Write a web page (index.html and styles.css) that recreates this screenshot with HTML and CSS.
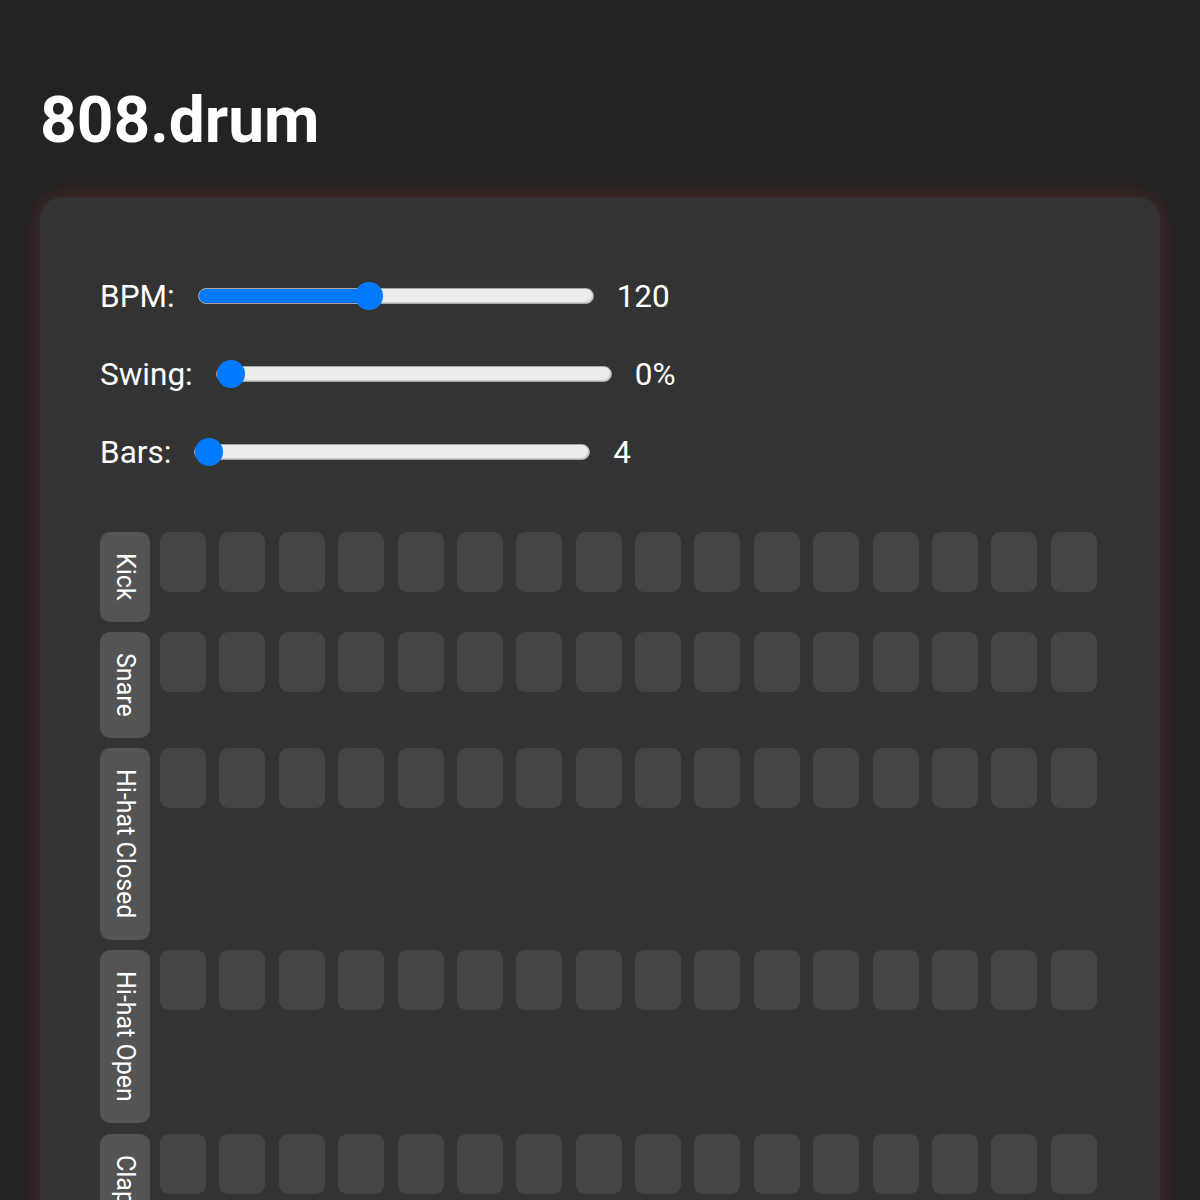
FILE: index.html
```html
<!DOCTYPE html>
<html lang="en">
<head>
<meta charset="utf-8">
<title>808.drum</title>
<link rel="stylesheet" href="styles.css">
</head>
<body>
<h1 class="title">808.drum</h1>
<main class="card">
  <section class="controls">
    <div class="control">
      <label class="control-label" for="bpm">BPM:</label>
      <input class="slider" id="bpm" type="range" min="60" max="200" value="120" style="--fill: 43.4%">
      <span class="control-value">120</span>
    </div>
    <div class="control">
      <label class="control-label" for="swing">Swing:</label>
      <input class="slider" id="swing" type="range" min="0" max="100" value="0" style="--fill: 3.5%">
      <span class="control-value">0%</span>
    </div>
    <div class="control">
      <label class="control-label" for="bars">Bars:</label>
      <input class="slider" id="bars" type="range" min="4" max="16" value="4" style="--fill: 3.5%">
      <span class="control-value">4</span>
    </div>
  </section>

  <section class="sequencer" id="sequencer"></section>
</main>
<script src="script.js"></script>
</body>
</html>
```

FILE: script.js
```js
const tracks = ["Kick", "Snare", "Hi-hat Closed", "Hi-hat Open", "Clap", "Rimshot"];
const seq = document.getElementById("sequencer");
tracks.forEach(name => {
  const label = document.createElement("div");
  label.className = "track-label";
  label.textContent = name;
  seq.appendChild(label);
  for (let i = 0; i < 16; i++) {
    const cell = document.createElement("button");
    cell.className = "step";
    cell.type = "button";
    seq.appendChild(cell);
  }
});
```

FILE: styles.css
```css
* { box-sizing: border-box; }

html, body {
  background: #232323;
}

body {
  margin: 0;
  padding: 0 40px 40px;
  color: #fff;
  font-family: Roboto, "Liberation Sans", sans-serif;
}

.title {
  margin: 83px 0 39px;
  font-size: 64px;
  line-height: 75px;
  font-weight: 700;
}

.card {
  background: #333333;
  border-radius: 22px;
  padding: 60px;
  box-shadow: 0 0 26px rgba(255, 60, 60, 0.22);
}

.controls {
  display: flex;
  flex-direction: column;
}

.control {
  display: flex;
  align-items: center;
  gap: 23px;
  height: 78px;
  font-size: 31.5px;
}

.control-label,
.control-value {
  color: #fff;
}

.slider {
  -webkit-appearance: none;
  appearance: none;
  width: 396px;
  height: 28px;
  margin: 0;
  padding: 0;
  background: transparent;
}

.slider::-webkit-slider-runnable-track {
  height: 16px;
  border-radius: 8px;
  border: 1px solid #a9a9a9;
  background: linear-gradient(to right, #007aff 0, #007aff var(--fill), #ececec var(--fill), #ececec 100%);
  box-shadow: inset -1px -1px 1px rgba(0, 0, 0, 0.15);
}

.slider::-webkit-slider-thumb {
  -webkit-appearance: none;
  appearance: none;
  width: 28px;
  height: 28px;
  margin-top: -7px;
  border: none;
  border-radius: 50%;
  background: #007aff;
}

.sequencer {
  margin-top: 41px;
  display: grid;
  grid-template-columns: 50px repeat(16, 1fr);
  column-gap: 10px;
  row-gap: 10.5px;
  align-items: start;
}

.track-label {
  writing-mode: vertical-rl;
  width: 50px;
  padding: 21px 0;
  line-height: 50px;
  font-size: 25px;
  text-align: center;
  background: #545454;
  border-radius: 10px;
  color: #fff;
}

.step {
  width: 46px;
  height: 60px;
  padding: 0;
  border: none;
  border-radius: 9px;
  background: #444444;
}
```
